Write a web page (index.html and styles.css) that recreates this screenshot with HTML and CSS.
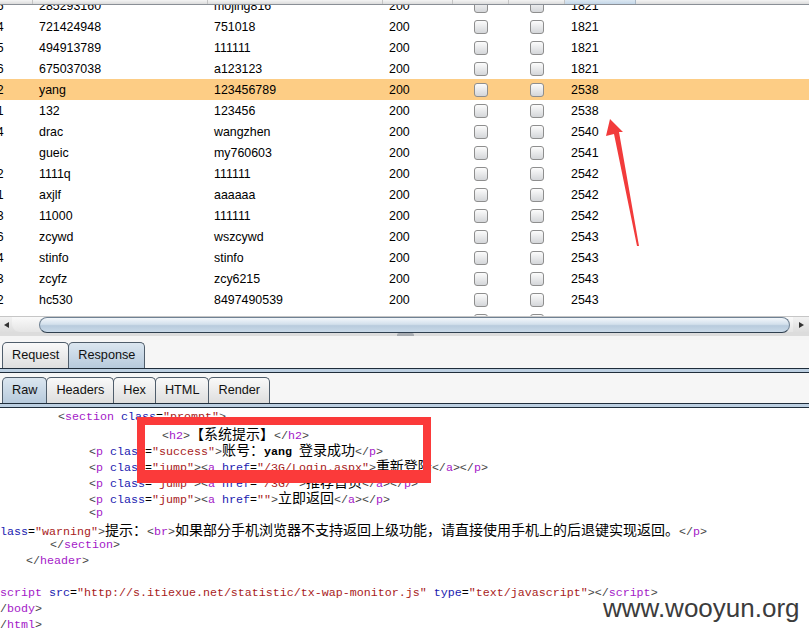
FILE: index.html
```html
<!DOCTYPE html>
<html>
<head>
<meta charset="utf-8">
<link rel="stylesheet" href="styles.css">
</head>
<body>
<div class="app">
  <div class="grid">
    <div class="thead">
      <div class="th"></div><div class="th"></div><div class="th"></div><div class="th"></div><div class="th"></div><div class="th"></div><div class="th sorted"></div><div class="th last"></div>
    </div>
    <div class="rows">
      <div class="row"><div class="c">1506</div><div class="c">285293160</div><div class="c">mojing816</div><div class="c">200</div><div class="c"><span class="cb"></span></div><div class="c"><span class="cb"></span></div><div class="c">1821</div><div class="c"></div></div>
      <div class="row"><div class="c">1504</div><div class="c">721424948</div><div class="c">751018</div><div class="c">200</div><div class="c"><span class="cb"></span></div><div class="c"><span class="cb"></span></div><div class="c">1821</div><div class="c"></div></div>
      <div class="row"><div class="c">1505</div><div class="c">494913789</div><div class="c">111111</div><div class="c">200</div><div class="c"><span class="cb"></span></div><div class="c"><span class="cb"></span></div><div class="c">1821</div><div class="c"></div></div>
      <div class="row"><div class="c">1506</div><div class="c">675037038</div><div class="c">a123123</div><div class="c">200</div><div class="c"><span class="cb"></span></div><div class="c"><span class="cb"></span></div><div class="c">1821</div><div class="c"></div></div>
      <div class="row sel"><div class="c">1502</div><div class="c">yang</div><div class="c">123456789</div><div class="c">200</div><div class="c"><span class="cb"></span></div><div class="c"><span class="cb"></span></div><div class="c">2538</div><div class="c"></div></div>
      <div class="row"><div class="c">1501</div><div class="c">132</div><div class="c">123456</div><div class="c">200</div><div class="c"><span class="cb"></span></div><div class="c"><span class="cb"></span></div><div class="c">2538</div><div class="c"></div></div>
      <div class="row"><div class="c">1504</div><div class="c">drac</div><div class="c">wangzhen</div><div class="c">200</div><div class="c"><span class="cb"></span></div><div class="c"><span class="cb"></span></div><div class="c">2540</div><div class="c"></div></div>
      <div class="row"><div class="c">151</div><div class="c">gueic</div><div class="c">my760603</div><div class="c">200</div><div class="c"><span class="cb"></span></div><div class="c"><span class="cb"></span></div><div class="c">2541</div><div class="c"></div></div>
      <div class="row"><div class="c">1502</div><div class="c">1111q</div><div class="c">111111</div><div class="c">200</div><div class="c"><span class="cb"></span></div><div class="c"><span class="cb"></span></div><div class="c">2542</div><div class="c"></div></div>
      <div class="row"><div class="c">1501</div><div class="c">axjlf</div><div class="c">aaaaaa</div><div class="c">200</div><div class="c"><span class="cb"></span></div><div class="c"><span class="cb"></span></div><div class="c">2542</div><div class="c"></div></div>
      <div class="row"><div class="c">1503</div><div class="c">11000</div><div class="c">111111</div><div class="c">200</div><div class="c"><span class="cb"></span></div><div class="c"><span class="cb"></span></div><div class="c">2542</div><div class="c"></div></div>
      <div class="row"><div class="c">1506</div><div class="c">zcywd</div><div class="c">wszcywd</div><div class="c">200</div><div class="c"><span class="cb"></span></div><div class="c"><span class="cb"></span></div><div class="c">2543</div><div class="c"></div></div>
      <div class="row"><div class="c">1504</div><div class="c">stinfo</div><div class="c">stinfo</div><div class="c">200</div><div class="c"><span class="cb"></span></div><div class="c"><span class="cb"></span></div><div class="c">2543</div><div class="c"></div></div>
      <div class="row"><div class="c">1503</div><div class="c">zcyfz</div><div class="c">zcy6215</div><div class="c">200</div><div class="c"><span class="cb"></span></div><div class="c"><span class="cb"></span></div><div class="c">2543</div><div class="c"></div></div>
      <div class="row"><div class="c">1502</div><div class="c">hc530</div><div class="c">8497490539</div><div class="c">200</div><div class="c"><span class="cb"></span></div><div class="c"><span class="cb"></span></div><div class="c">2543</div><div class="c"></div></div>
      <div class="row"><div class="c">1503</div><div class="c">wblxT</div><div class="c">38381420</div><div class="c">200</div><div class="c"><span class="cb"></span></div><div class="c"><span class="cb"></span></div><div class="c">2543</div><div class="c"></div></div>
    </div>
  </div>

  <div class="hscroll">
    <div class="sb-btn"><span class="arr-l"></span></div>
    <div class="sb-track"><div class="sb-thumb"></div></div>
    <div class="sb-btn"><span class="arr-r"></span></div>
  </div>

  <div class="splitter"><span class="grip"></span></div>

  <div class="tabs tabs-main">
    <div class="tab">Request</div>
    <div class="tab on">Response</div>
  </div>
  <div class="band"></div>
  <div class="tabs tabs-sub">
    <div class="tab on">Raw</div>
    <div class="tab">Headers</div>
    <div class="tab">Hex</div>
    <div class="tab">HTML</div>
    <div class="tab">Render</div>
  </div>
  <div class="band"></div>

  <div class="code">
    <div class="ln i58"><span class="p">&lt;</span><span class="t">section</span> <span class="a">class</span>=<span class="v">"prompt"</span><span class="p">&gt;</span></div>
    <div class="ln i162"><span class="p">&lt;</span><span class="t">h2</span><span class="p">&gt;</span><span class="zh">【系统提示】</span><span class="p">&lt;/</span><span class="t">h2</span><span class="p">&gt;</span></div>
    <div class="ln i89"><span class="p">&lt;</span><span class="t">p</span> <span class="a">class</span>=<span class="v">"success"</span><span class="p">&gt;</span><span class="zh">账号：</span><b>yang</b> <span class="zh">登录成功</span><span class="p">&lt;/</span><span class="t">p</span><span class="p">&gt;</span></div>
    <div class="ln i89"><span class="p">&lt;</span><span class="t">p</span> <span class="a">class</span>=<span class="v">"jump"</span><span class="p">&gt;&lt;</span><span class="t">a</span> <span class="a">href</span>=<span class="v">"/3G/Login.aspx"</span><span class="p">&gt;</span><span class="zh">重新登陆</span><span class="p">&lt;/</span><span class="t">a</span><span class="p">&gt;&lt;/</span><span class="t">p</span><span class="p">&gt;</span></div>
    <div class="ln i89"><span class="p">&lt;</span><span class="t">p</span> <span class="a">class</span>=<span class="v">"jump"</span><span class="p">&gt;&lt;</span><span class="t">a</span> <span class="a">href</span>=<span class="v">"/3G/"</span><span class="p">&gt;</span><span class="zh">推荐首页</span><span class="p">&lt;/</span><span class="t">a</span><span class="p">&gt;&lt;/</span><span class="t">p</span><span class="p">&gt;</span></div>
    <div class="ln i89"><span class="p">&lt;</span><span class="t">p</span> <span class="a">class</span>=<span class="v">"jump"</span><span class="p">&gt;&lt;</span><span class="t">a</span> <span class="a">href</span>=<span class="v">""</span><span class="p">&gt;</span><span class="zh">立即返回</span><span class="p">&lt;/</span><span class="t">a</span><span class="p">&gt;&lt;/</span><span class="t">p</span><span class="p">&gt;</span></div>
    <div class="ln i89"><span class="p">&lt;</span><span class="t">p</span></div>
    <div class="ln"><span class="a">lass</span>=<span class="v">"warning"</span><span class="p">&gt;</span><span class="zh">提示：</span><span class="p">&lt;</span><span class="t">br</span><span class="p">&gt;</span><span class="zh">如果部分手机浏览器不支持返回上级功能，请直接使用手机上的后退键实现返回。</span><span class="p">&lt;/</span><span class="t">p</span><span class="p">&gt;</span></div>
    <div class="ln i50"><span class="p">&lt;/</span><span class="t">section</span><span class="p">&gt;</span></div>
    <div class="ln i26"><span class="p">&lt;/</span><span class="t">header</span><span class="p">&gt;</span></div>
    <div class="ln"></div>
    <div class="ln"><span class="t">script</span> <span class="a">src</span>=<span class="v">"http://s.itiexue.net/statistic/tx-wap-monitor.js"</span> <span class="a">type</span>=<span class="v">"text/javascript"</span><span class="p">&gt;&lt;/</span><span class="t">script</span><span class="p">&gt;</span></div>
    <div class="ln"><span class="p">/</span><span class="t">body</span><span class="p">&gt;</span></div>
    <div class="ln"><span class="p">/</span><span class="t">html</span><span class="p">&gt;</span></div>
  </div>

  <div class="redbox"></div>
  <svg class="arrow" width="50" height="140" viewBox="600 112 50 140">
    <polygon points="610,119 623,132 619,132 639,246 637,246 614,134 606,136" fill="#f23b3b"/>
  </svg>
  <div class="wm">www.wooyun.org</div>
</div>
</body>
</html>
```

FILE: styles.css
```css
html, body {
  margin: 0;
  padding: 0;
  background: #ffffff;
}
.app {
  position: relative;
  width: 809px;
  height: 639px;
  overflow: hidden;
  font-family: "Liberation Sans", Arial, sans-serif;
}

/* table */
.grid {
  height: 316px;
  overflow: hidden;
  background: #fff;
}
.thead, .row {
  display: grid;
  grid-template-columns: 63px 175px 175px 70px 56px 56px 71px 1fr;
  margin-left: -30px;
}
.thead {
  position: relative;
  z-index: 1;
  height: 4px;
  border-bottom: 1px solid #8a8f96;
  background: linear-gradient(#f4f4f4, #dcdcdc);
}
.th {
  border-right: 1px solid #c4c4c4;
}
.th.sorted {
  background: linear-gradient(#dce8f2, #c3d6e7);
  border-right-color: #a9b8c6;
}
.th.last { border-right: none; }
.rows {
  margin-top: -10px;
}
.row {
  height: 21px;
  font-size: 12.4px;
  line-height: 22px;
  color: #000;
}
.row.sel {
  background: #fdcd85;
}
.c {
  padding-left: 6px;
  white-space: nowrap;
  overflow: hidden;
}
.c:nth-child(5), .c:nth-child(6) {
  padding-left: 0;
  display: flex;
  align-items: center;
  justify-content: center;
}
.cb {
  display: block;
  width: 12px;
  height: 12px;
  border: 1px solid #8e8e8e;
  border-radius: 3px;
  background: linear-gradient(#fcfcfc, #d4d6d9);
}

/* horizontal scrollbar */
.hscroll {
  display: flex;
  height: 16px;
  background: linear-gradient(#f2f2f2, #dddddd);
  border-top: 1px solid #c6c6c6;
  box-sizing: border-box;
}
.sb-btn {
  width: 12px;
  display: flex;
  align-items: center;
  justify-content: center;
}
.sb-btn:last-child { width: 16px; }
.arr-l {
  width: 0; height: 0;
  border-top: 3px solid transparent;
  border-bottom: 3px solid transparent;
  border-right: 5px solid #333;
}
.arr-r {
  width: 0; height: 0;
  border-top: 3px solid transparent;
  border-bottom: 3px solid transparent;
  border-left: 5px solid #333;
}
.sb-track {
  flex: 1;
  display: flex;
  padding-left: 27px;
  padding-right: 3px;
  background: linear-gradient(#fafafa, #e4e4e4);
  border-radius: 0 0 0 8px;
}
.sb-thumb {
  flex: 1;
  height: 14px;
  border: 1px solid #6f8193;
  border-bottom-color: #2e3e4e;
  border-radius: 8px;
  background: linear-gradient(#f3f7fb, #d3e0ec 45%, #b8cbdd 55%, #c9d9e8);
}

/* splitter */
.splitter {
  height: 8px;
  background: linear-gradient(#dcdcdc 0, #dcdcdc 4px, #f4f4f4 4px);
  display: flex;
  justify-content: center;
}
.grip {
  width: 17px;
  height: 3px;
  margin-top: 1px;
  margin-left: 2px;
  background: #a7abb0;
  border-radius: 2px 2px 0 0;
}

/* tabs */
.tabs {
  display: flex;
  align-items: flex-end;
  padding-left: 2px;
  background: #f6f6f6;
  box-sizing: border-box;
}
.tabs-main { height: 28px; }
.tabs-sub { height: 30px; }
.tab {
  height: 25px;
  padding: 0 9px;
  border: 1px solid #4f5d6b;
  border-bottom: none;
  border-radius: 5px 5px 0 0;
  margin-right: -1px;
  background: linear-gradient(#f9f9f9, #dedede);
  font-size: 12.7px;
  line-height: 25px;
  color: #111;
}
.tab.on {
  background: linear-gradient(#dbe6f0, #b7cadc);
}
.band {
  height: 3px;
  border-top: 1px solid #1f2d3b;
  border-bottom: 1px solid #1f2d3b;
  background: #bccfe1;
}

/* code */
.code {
  background: #fff;
  padding-top: 1px;
  font-family: "Liberation Mono", "Noto Sans CJK SC", monospace;
  font-size: 11.67px;
  line-height: 16px;
  color: #000;
}
.ln {
  height: 16px;
  white-space: pre;
}
.i26 { padding-left: 26px; }
.i50 { padding-left: 50px; }
.i58 { padding-left: 58px; }
.i89 { padding-left: 89px; }
.i162 { padding-left: 162px; }
.zh {
  font-family: "Noto Sans CJK SC", sans-serif;
  font-size: 14px;
  line-height: 16px;
}
.t { color: #a419c8; }
.a { color: #1a1ab0; }
.v { color: #a81c1c; }
.p { color: #444; }
.code b { font-weight: bold; }

/* overlays */
.redbox {
  position: absolute;
  left: 137px;
  top: 417px;
  width: 278px;
  height: 45px;
  border: 8px solid #fb3a3a;
  border-bottom-width: 13px;
}
.arrow {
  position: absolute;
  left: 600px;
  top: 112px;
}
.wm {
  position: absolute;
  left: 603px;
  top: 595px;
  font-family: "Liberation Sans", Arial, sans-serif;
  font-size: 26px;
  line-height: 26px;
  color: #3c3c3c;
  text-shadow: 0 0 2px #fff, 0 0 2px #fff;
}
```
